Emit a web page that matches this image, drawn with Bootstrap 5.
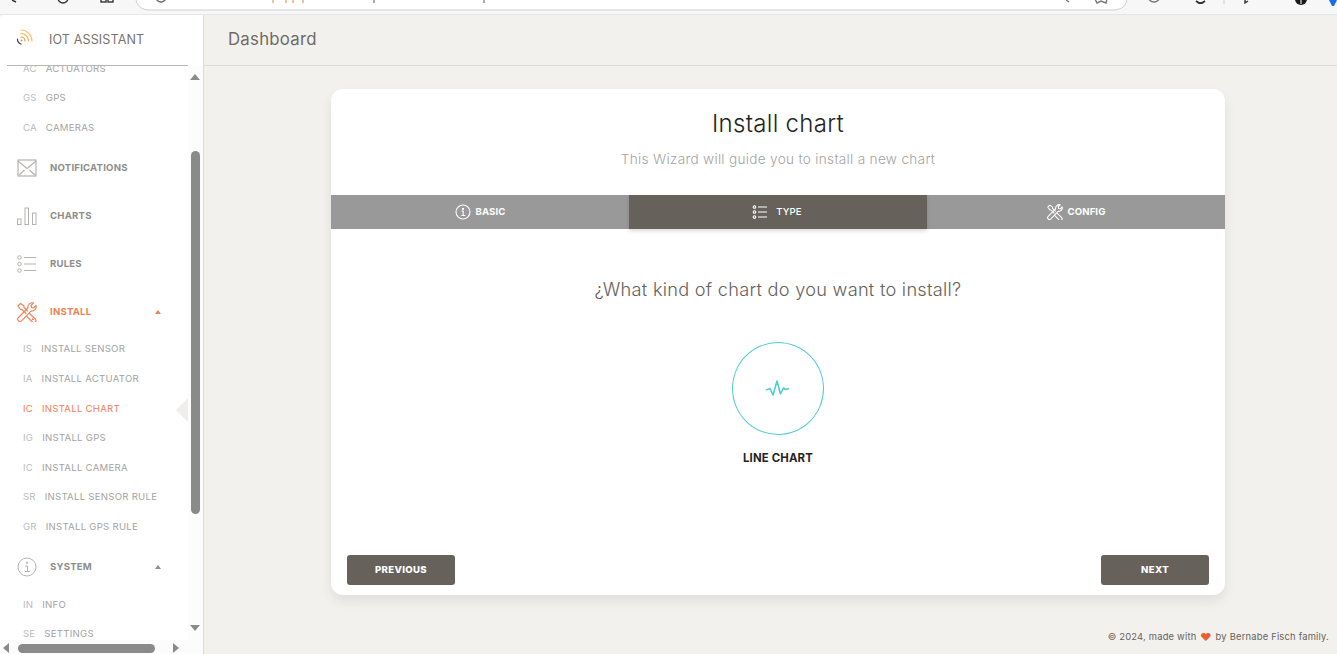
<!DOCTYPE html>
<html lang="en"><head><meta charset="utf-8"><title>IoT Assistant</title>
<link href="https://cdn.jsdelivr.net/npm/bootstrap@5.3.0/dist/css/bootstrap.min.css" rel="stylesheet">
<style>
html,body{height:654px;overflow:hidden}
body{font-family:Inter,"Noto Sans",sans-serif;background:#f3f1ee;color:#333}
.chrome-strip{display:block;height:15px;width:1337px}
.shell{height:639px}
.side-col{width:203px;background:#fff;border-radius:4px 0 0 0;flex:none;position:relative;overflow:hidden}
.brand-row{height:51px;margin:0 15px 0 7px;border-bottom:1px solid #b9b7b4;padding-left:8px;gap:14px;font-size:12.6px;color:#777470;letter-spacing:.1px}
.brand-row svg{margin-top:-6px}
.side-scroll{height:588px;overflow:hidden;width:188px;padding-left:23px}
.sub-link{height:29.6px;font-size:9.6px;color:#a3a3a3;white-space:nowrap;letter-spacing:.26px}
.sub-tag{color:#bcbcbc;margin-right:9px;letter-spacing:.2px}
.sub-first{margin-top:-12px}
.main-link{height:48px;font-size:9.6px;font-weight:700;color:#8f8d8a;margin-left:-6px;letter-spacing:.2px;gap:13px}
.main-link svg{flex:none}
.after-subs{margin-top:1px}
.after-main{margin-bottom:-1px}
.sys-after{margin-bottom:-1px}
.is-on,.is-on .sub-tag{color:#ef8157}
.caret-up{width:0;height:0;border-left:3.5px solid transparent;border-right:3.5px solid transparent;border-bottom:4px solid currentColor;margin-left:auto;margin-right:27px}
.v-track{position:absolute;left:188px;top:51px;width:15px;height:588px;background:#fcfcfc}
.v-thumb{position:absolute;left:191px;top:136px;width:9px;height:363px;background:#8a8a8a;border-radius:5px}
.h-track{position:absolute;left:0;top:625px;width:188px;height:14px;background:#fcfcfc}
.h-thumb{position:absolute;left:18px;top:629px;width:137px;height:9px;background:#8a8a8a;border-radius:5px}
.arr{position:absolute;width:0;height:0;border:5px solid transparent}
.arr-up{left:190px;top:59px;border-bottom:6px solid #8a8a8a;border-top:0}
.arr-down{left:190px;top:610px;border-top:6px solid #8a8a8a;border-bottom:0}
.arr-left{left:3px;top:628px;border-right:6px solid #8a8a8a;border-left:0}
.arr-right{left:173px;top:628px;border-left:6px solid #8a8a8a;border-right:0}
.side-notch{position:absolute;left:176px;top:383px;width:0;height:0;border-top:12px solid transparent;border-bottom:12px solid transparent;border-right:12px solid #efeeec}
.main-col{min-width:0;border-left:1px solid #dddbd7}
.top-head{height:51px;border-bottom:1px solid #dddbd7;padding-left:24px;font-size:16.8px;color:#6f6b66;letter-spacing:.25px;flex:none}
.wizard{width:894px;height:506px;margin:23px 0 0 127px;background:#fff;border-radius:12px;box-shadow:0 6px 12px rgba(0,0,0,.08);overflow:hidden;flex:none}
.wiz-title{margin:22px 0 0;height:26px;line-height:26px;font-size:24px;font-weight:300;color:#252422;text-align:center;letter-spacing:.3px}
.wiz-sub{margin:12px 0 0;height:20px;line-height:20px;font-size:13.6px;font-weight:300;color:#a3a3a3;text-align:center;letter-spacing:.31px}
.wiz-tabs{margin-top:26px;height:34px;background:#999}
.wiz-tab{width:298px;font-size:9.6px;font-weight:700;color:#fff;gap:5px;letter-spacing:.1px}
.wiz-tab.tab-on{background:#66615b;font-weight:500;box-shadow:0 2px 4px rgba(0,0,0,.15);gap:8px;padding-right:2px}
.wiz-q{margin:49px 0 0;height:22px;line-height:22px;font-size:18.2px;font-weight:300;color:#66615b;text-align:center;letter-spacing:.26px}
.pick-circle{width:92px;height:93px;border:1px solid #4fcdd4;border-radius:50%;margin:42px auto 0}
.pick-label{margin:15px 0 0;height:16px;line-height:16px;font-size:11.4px;font-weight:700;color:#252422;text-align:center;letter-spacing:.15px}
.wiz-foot{margin-top:auto;padding:0 16px 10px}
.wiz-btn{width:108px;height:30px;padding:0;background:#66615b;border:0;border-radius:3px;color:#fff;font-size:9.6px;font-weight:800;letter-spacing:.35px}
.wiz-btn:hover{background:#66615b;color:#fff}
.foot-note{margin-top:auto;height:34px;padding-right:8px;font-size:9.4px;color:#66615b;letter-spacing:.2px}
.love{color:#e8622c;font-size:11px;margin:0 1px}
</style></head><body>
<svg class="chrome-strip" viewBox="0 0 1337 15" fill="none" aria-hidden="true">
<rect width="1337" height="15" fill="#f7f7f7"/><rect y="14" width="1337" height="1" fill="#e6e6e6"/>
<path d="M136 -2C136 5 141 10 150 10H1113C1122 10 1127 5 1127 -2" fill="#fff" stroke="#cfcfcf"/>
<g stroke="#333" stroke-width="1.4"><path d="M12 0l4 2"/><circle cx="63" cy="-2" r="5"/><rect x="101" y="-4" width="5" height="6"/><rect x="108" y="-4" width="5" height="6"/>
<circle cx="161" cy="-3" r="5" stroke="#666"/><circle cx="1154" cy="-4" r="6" stroke="#777"/><path d="M1196 1l3 2h3l3-2" stroke-width="2"/><path d="M1245 0v3l3-2" /><path d="M1095 -1l2 4 4-2 5 2 1-4" stroke="#777"/><path d="M1066 0l3 2" stroke="#777"/></g>
<path d="M1224 0v4" stroke="#ccc"/>
<circle cx="1301" cy="-1" r="6" fill="#1b1b1b"/><path d="M1301 0v4" stroke="#fff"/><path d="M1329 0h8l-3 6h-2z" fill="#1a6fe8"/>
<g stroke-width="1.2"><path d="M273 0v3M286 0v3M293 0v3M303 0v3" stroke="#e69a5a"/><path d="M374 0v3M484 0v3" stroke="#777"/></g>
</svg>
<div class="shell d-flex">
<aside class="side-col">
<div class="brand-row d-flex align-items-center">
<svg width="20" height="20" viewBox="0 0 20 20" fill="none" stroke-linecap="round"><path d="M6 3a11 11 0 0 1 11 11" stroke="#f5c777" stroke-width="1.2"/><path d="M6 6.500a7.500 7.500 0 0 1 7.500 7.500" stroke="#f2b45c" stroke-width="1.2"/><path d="M6 10a4 4 0 0 1 4 4" stroke="#ee9a3a" stroke-width="1.2"/><path d="M2.500 12a5 5 0 0 0 3.500 5" stroke="#33404f" stroke-width="1.2"/><circle cx="6.500" cy="13.500" r="1" fill="#e8972f"/></svg>
<span>IOT ASSISTANT</span></div>
<nav class="side-scroll">
<div class="sub-link sub-first d-flex align-items-center"><span class="sub-tag">AC</span>ACTUATORS</div>
<div class="sub-link d-flex align-items-center"><span class="sub-tag">GS</span>GPS</div>
<div class="sub-link d-flex align-items-center"><span class="sub-tag">CA</span>CAMERAS</div>
<div class="main-link after-subs d-flex align-items-center">
<svg width="20" height="20" viewBox="0 0 20 20" fill="none" stroke="#b5b3b0" stroke-width="1.200"><rect x="1" y="2" width="18" height="16"/><path d="M1 3l9 7.500L19 3M2 17l5.500-5M18 17l-5.500-5"/></svg>NOTIFICATIONS</div>
<div class="main-link d-flex align-items-center">
<svg width="20" height="20" viewBox="0 0 20 20" fill="none" stroke="#b5b3b0"><rect x=".5" y="13" width="3.500" height="5.500"/><rect x="8" y="2" width="3.500" height="16.500"/><rect x="15.500" y="7" width="3.500" height="11.500"/></svg>CHARTS</div>
<div class="main-link d-flex align-items-center">
<svg width="20" height="20" viewBox="0 0 20 20" fill="none" stroke="#b5b3b0"><circle cx="2.500" cy="3.500" r="1.800"/><circle cx="2.500" cy="10" r="1.800"/><circle cx="2.500" cy="16.500" r="1.800"/><path d="M7 3.500h12M7 10h12M7 16.500h12"/></svg>RULES</div>
<div class="main-link after-main is-on d-flex align-items-center">
<svg width="20" height="20" viewBox="0 0 20 20" fill="none" stroke="#ef8157" stroke-width="1.100" stroke-linejoin="round" stroke-linecap="round"><path d="M1.500 15.500L10.800 6M14 9.200L4.500 18.800a2.100 2.100 0 0 1-3-3.300"/><path d="M10.800 6a4.500 4.500 0 0 1 5.700-5L14 3.500l.5 2 2 .5L19 3.500a4.500 4.500 0 0 1-5 5.700"/><path d="M12.500 11.500l5.800 5.500a2.100 2.100 0 0 1-3 3l-5.500-5.500"/><path d="M9 11.500L5 7.500H3.500L1 4 3.500 1.500 7 4v1.500l3.500 3.500"/><circle cx="15.800" cy="17.300" r=".5"/></svg>INSTALL<i class="caret-up"></i></div>
<div class="sub-link d-flex align-items-center"><span class="sub-tag">IS</span>INSTALL SENSOR</div>
<div class="sub-link d-flex align-items-center"><span class="sub-tag">IA</span>INSTALL ACTUATOR</div>
<div class="sub-link is-on d-flex align-items-center"><span class="sub-tag">IC</span>INSTALL CHART</div>
<div class="sub-link d-flex align-items-center"><span class="sub-tag">IG</span>INSTALL GPS</div>
<div class="sub-link d-flex align-items-center"><span class="sub-tag">IC</span>INSTALL CAMERA</div>
<div class="sub-link d-flex align-items-center"><span class="sub-tag">SR</span>INSTALL SENSOR RULE</div>
<div class="sub-link d-flex align-items-center"><span class="sub-tag">GR</span>INSTALL GPS RULE</div>
<div class="main-link after-subs sys-after d-flex align-items-center">
<svg width="20" height="20" viewBox="0 0 20 20" fill="none" stroke="#b5b3b0"><circle cx="10" cy="10" r="9"/><circle cx="10" cy="5.800" r=".7" fill="#b5b3b0"/><path d="M8 9h2.500v5.500M8 14.500h5"/></svg>SYSTEM<i class="caret-up"></i></div>
<div class="sub-link d-flex align-items-center"><span class="sub-tag">IN</span>INFO</div>
<div class="sub-link d-flex align-items-center"><span class="sub-tag">SE</span>SETTINGS</div>
</nav>
<div class="side-notch"></div>
<div class="v-track"></div><div class="v-thumb"></div><div class="arr arr-up"></div><div class="arr arr-down"></div>
<div class="h-track"></div><div class="h-thumb"></div><div class="arr arr-left"></div><div class="arr arr-right"></div>
</aside>
<main class="main-col flex-grow-1 d-flex flex-column">
<div class="top-head d-flex align-items-center">Dashboard</div>
<section class="wizard d-flex flex-column">
<h5 class="wiz-title">Install chart</h5>
<p class="wiz-sub">This Wizard will guide you to install a new chart</p>
<div class="wiz-tabs d-flex">
<div class="wiz-tab d-flex align-items-center justify-content-center">
<svg width="16" height="16" viewBox="0 0 16 16" fill="none" stroke="#fff" stroke-width="1.100"><circle cx="8" cy="8" r="7"/><circle cx="8" cy="4.800" r=".6" fill="#fff"/><path d="M6.500 7H8.200v4.500M6.300 11.500h4"/></svg>BASIC</div>
<div class="wiz-tab tab-on d-flex align-items-center justify-content-center">
<svg width="16" height="16" viewBox="0 0 16 16" fill="none" stroke="#fff" stroke-width="1.100"><circle cx="2.500" cy="3" r="1.300"/><circle cx="2.500" cy="8" r="1.300"/><circle cx="2.500" cy="13" r="1.300"/><path d="M6 3h9M6 8h9M6 13h9"/></svg>TYPE</div>
<div class="wiz-tab d-flex align-items-center justify-content-center">
<svg width="16" height="16" viewBox="0 0 20 20" fill="none" stroke="#fff" stroke-width="1.300" stroke-linejoin="round" stroke-linecap="round"><path d="M1.500 15.500L10.800 6M14 9.200L4.500 18.800a2.100 2.100 0 0 1-3-3.300"/><path d="M10.800 6a4.500 4.500 0 0 1 5.700-5L14 3.500l.5 2 2 .5L19 3.500a4.500 4.500 0 0 1-5 5.700"/><path d="M12.500 11.500l5.800 5.500a2.100 2.100 0 0 1-3 3l-5.500-5.500"/><path d="M9 11.500L5 7.500H3.500L1 4 3.500 1.500 7 4v1.500l3.500 3.500"/></svg>CONFIG</div>
</div>
<h5 class="wiz-q">¿What kind of chart do you want to install?</h5>
<div class="pick-circle d-flex align-items-center justify-content-center">
<svg width="24" height="20" viewBox="0 0 24 20" fill="none" stroke="#4fcdd4" stroke-width="1.600" stroke-linejoin="round"><path d="M0 11l4-1.500 3 6.500 4-14 3.500 13 3-6 2 1.500 3.500-1"/></svg></div>
<p class="pick-label">LINE CHART</p>
<div class="wiz-foot d-flex justify-content-between">
<button class="btn wiz-btn" type="button">PREVIOUS</button>
<button class="btn wiz-btn" type="button">NEXT</button></div>
</section>
<footer class="foot-note d-flex align-items-center justify-content-end">© 2024, made with&nbsp;<span class="love">♥</span>&nbsp;by Bernabe Fisch family.</footer>
</main>
</div>
<script src="https://cdn.jsdelivr.net/npm/bootstrap@5.3.0/dist/js/bootstrap.bundle.min.js"></script>
</body></html>
